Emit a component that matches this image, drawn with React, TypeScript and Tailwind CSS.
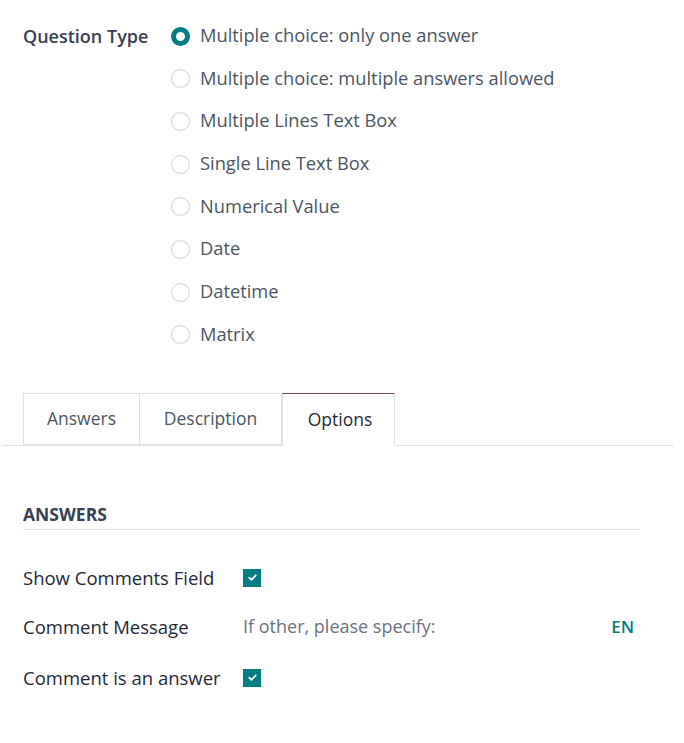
const FONT = { fontFamily: '"Open Sans", "Noto Sans", sans-serif' };

const questionTypes = [
  "Multiple choice: only one answer",
  "Multiple choice: multiple answers allowed",
  "Multiple Lines Text Box",
  "Single Line Text Box",
  "Numerical Value",
  "Date",
  "Datetime",
  "Matrix",
];

function Radio({ checked }: { checked: boolean }) {
  return checked ? (
    <span className="size-[19px] rounded-full border-[5px] border-[#017e84] bg-white" />
  ) : (
    <span className="size-[19px] rounded-full border border-[#cfd2d6] bg-white" />
  );
}

function Check() {
  return (
    <span className="flex size-[18px] items-center justify-center bg-[#017e84]">
      <svg viewBox="0 0 12 12" className="size-[11px]" fill="none">
        <path d="M2.5 6.3 L4.9 8.6 L9.5 3.6" stroke="white" strokeWidth="2" strokeLinecap="round" strokeLinejoin="round" />
      </svg>
    </span>
  );
}

export default function App() {
  return (
    <div className="min-h-[743px] w-[684px] bg-white text-[#374151]" style={FONT}>
      <div className="flex pl-[23px] pt-[22px]">
        <div className="w-[148px] text-[18px] font-semibold leading-[28px] text-[#374151]">
          Question Type
        </div>
        <div className="flex flex-col">
          {questionTypes.map((q, i) => (
            <label key={q} className="flex h-[42.7px] items-start gap-[10px]">
              <span className="mt-[4.5px] flex">
                <Radio checked={i === 0} />
              </span>
              <span className="-mt-px text-[18.3px] leading-[28px] text-[#4b5563]">{q}</span>
            </label>
          ))}
        </div>
      </div>

      <div className="ml-[2px] mt-[29px] flex w-[672px] border-b border-[#dee2e6] pl-[21px]">
        <div className="-mb-px flex h-[52px] w-[117px] items-center justify-center border border-[#dee2e6] text-[17.5px] text-[#4b5563]">
          Answers
        </div>
        <div className="-mb-px -ml-px flex h-[52px] w-[143px] items-center justify-center border border-[#dee2e6] text-[17.5px] text-[#4b5563]">
          Description
        </div>
        <div className="-mb-px flex h-[53px] w-[113px] items-center justify-center border border-[#dee2e6] border-t-[#714b67] border-b-white bg-white pl-[3px] text-[17.5px] text-[#1f2937]">
          Options
        </div>
      </div>

      <div className="px-[23px] pt-[56px]">
        <div className="w-[617px] border-b border-[#dee2e6] pb-[2px] text-[17.5px] font-bold leading-[25px] text-[#374151]">
          ANSWERS
        </div>
        <div className="mt-[32px] flex h-[32px] items-center">
          <div className="w-[220px] text-[18.5px] font-medium text-[#1f2937]">Show Comments Field</div>
          <Check />
        </div>
        <div className="mt-[17px] flex h-[32px] w-[611px] items-center">
          <div className="w-[220px] text-[18.5px] font-medium text-[#1f2937]">Comment Message</div>
          <div className="flex-1 text-[18px] text-[#6b7280]">If other, please specify:</div>
          <div className="text-[17px] font-semibold text-[#017e84]">EN</div>
        </div>
        <div className="mt-[19px] flex h-[32px] items-center">
          <div className="w-[220px] text-[18.5px] font-medium text-[#1f2937]">Comment is an answer</div>
          <Check />
        </div>
      </div>
    </div>
  );
}
